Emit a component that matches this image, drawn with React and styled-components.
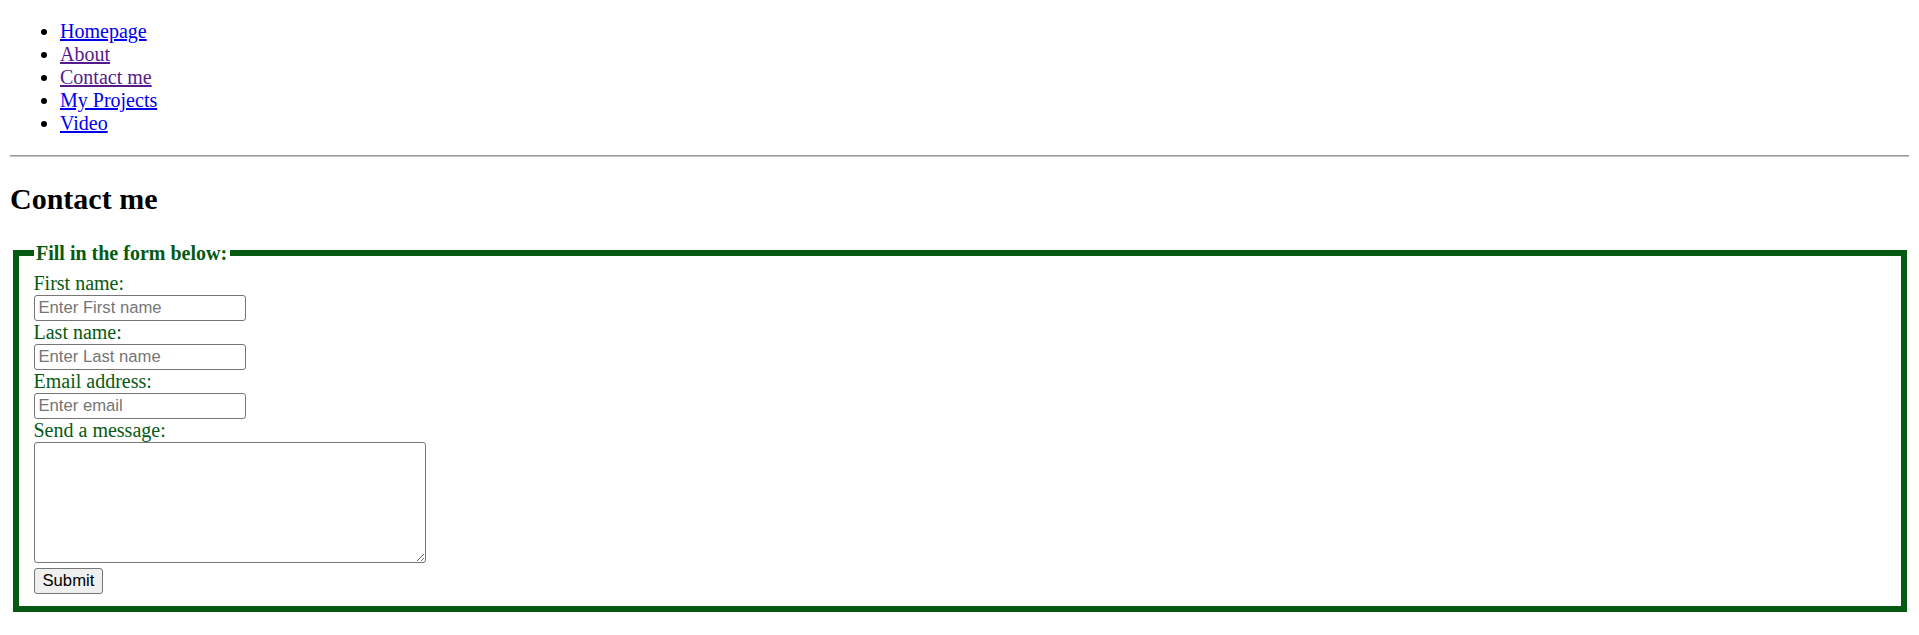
import React from 'react';
import styled, { createGlobalStyle } from 'styled-components';

const GREEN = '#065a12';

const GlobalStyle = createGlobalStyle`
  body {
    margin: 0;
    font-family: "Liberation Serif", "Times New Roman", serif;
    font-size: 20px;
    line-height: 23px;
    color: #000;
    background: #fff;
  }
`;

const Page = styled.div`
  padding: 20px 10px 10px;
`;

const NavList = styled.ul`
  margin: 0 0 20px;
  padding-left: 50px;
  list-style: disc;
`;

const NavItem = styled.li`
  line-height: 23px;
`;

const NavLink = styled.a`
  color: ${(p) => (p.$visited ? '#551a8b' : '#0000ee')};
  text-decoration: underline;
`;

const Divider = styled.hr`
  margin: 0;
  height: 0;
  border: none;
  border-top: 1px solid #9a9a9a;
  border-bottom: 1px solid #c4c4c4;
`;

const Title = styled.h2`
  margin: 25px 0;
  font-size: 30px;
  line-height: 34.5px;
  font-weight: bold;
`;

const FormBox = styled.fieldset`
  margin: 0 2.5px;
  padding: 7px 15px 12.5px;
  border: 6px solid ${GREEN};
  color: ${GREEN};
`;

const FormLegend = styled.legend`
  padding: 0 2.5px;
  font-weight: bold;
  color: ${GREEN};
`;

const Label = styled.label`
  display: block;
  line-height: 23px;
`;

const TextInput = styled.input`
  display: block;
  box-sizing: border-box;
  width: 212px;
  height: 26px;
  margin: 0;
  padding: 1px 4px;
  border: 1px solid #767676;
  border-radius: 3px;
  font-family: "Liberation Sans", Arial, sans-serif;
  font-size: 16.67px;
  color: #000;

  &::placeholder {
    color: #757575;
  }
`;

const MessageBox = styled.textarea`
  display: block;
  box-sizing: border-box;
  width: 392px;
  height: 121px;
  margin: 0 0 5px;
  padding: 2px 3px;
  border: 1px solid #767676;
  border-radius: 3px;
  font-family: "Liberation Mono", monospace;
  font-size: 16.67px;
`;

const SubmitButton = styled.button`
  display: block;
  box-sizing: border-box;
  height: 26px;
  margin: 0;
  padding: 1px 8px;
  border: 1px solid #767676;
  border-radius: 3px;
  background: #efefef;
  color: #000;
  font-family: "Liberation Sans", Arial, sans-serif;
  font-size: 16.67px;
`;

const links = [
  { label: 'Homepage', visited: false },
  { label: 'About', visited: true },
  { label: 'Contact me', visited: true },
  { label: 'My Projects', visited: false },
  { label: 'Video', visited: false },
];

export default function App() {
  return (
    <Page>
      <GlobalStyle />
      <NavList>
        {links.map((l) => (
          <NavItem key={l.label}>
            <NavLink href="#" $visited={l.visited}>{l.label}</NavLink>
          </NavItem>
        ))}
      </NavList>
      <Divider />
      <Title>Contact me</Title>
      <form onSubmit={(e) => e.preventDefault()}>
        <FormBox>
          <FormLegend>Fill in the form below:</FormLegend>
          <Label htmlFor="fname">First name:</Label>
          <TextInput id="fname" type="text" placeholder="Enter First name" />
          <Label htmlFor="lname">Last name:</Label>
          <TextInput id="lname" type="text" placeholder="Enter Last name" />
          <Label htmlFor="email">Email address:</Label>
          <TextInput id="email" type="email" placeholder="Enter email" />
          <Label htmlFor="msg">Send a message:</Label>
          <MessageBox id="msg" />
          <SubmitButton type="submit">Submit</SubmitButton>
        </FormBox>
      </form>
    </Page>
  );
}
